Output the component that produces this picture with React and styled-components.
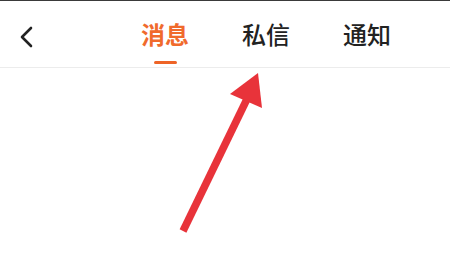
import React from "react";
import styled, { createGlobalStyle } from "styled-components";

const Global = createGlobalStyle`
  html, body { margin: 0; padding: 0; background: #fff; }
  body { font-family: "Noto Sans CJK SC", "Noto Sans", sans-serif; }
`;

const Page = styled.div`
  position: relative;
  width: 450px;
  height: 261px;
  background: #fff;
  border-top: 1px solid #3a3a3a;
  box-sizing: border-box;
  overflow: hidden;
`;

const Header = styled.div`
  display: flex;
  align-items: flex-start;
  height: 66px;
  border-bottom: 1px solid #ececec;
`;

const Back = styled.div`
  width: 141px;
  padding: 25px 0 0 19px;
  box-sizing: border-box;
  color: #222;
`;

const Tabs = styled.div`
  display: flex;
  gap: 53px;
  padding-top: 18px;
`;

const Tab = styled.div`
  display: flex;
  flex-direction: column;
  align-items: center;
  width: 48px;
  font-size: 24px;
  line-height: 30px;
  font-weight: ${p => (p.active ? 700 : 500)};
  color: ${p => (p.active ? "#f06a2c" : "#222")};
`;

const Underline = styled.div`
  margin-top: 12px;
  width: 23px;
  height: 3px;
  border-radius: 2px;
  background: ${p => (p.active ? "#ee6427" : "transparent")};
`;

const ArrowLayer = styled.svg`
  position: absolute;
  left: 0;
  top: 0;
`;

export default function App() {
  const tabs = ["消息", "私信", "通知"];
  return (
    <>
      <Global />
      <Page>
        <Header>
          <Back>
            <svg width="16" height="22" viewBox="0 0 16 22">
              <path d="M12 2 L3 11 L12 20" fill="none" stroke="#222" strokeWidth="2.6" strokeLinecap="round" strokeLinejoin="round" />
            </svg>
          </Back>
          <Tabs>
            {tabs.map((t, i) => (
              <Tab key={t} active={i === 0}>
                {t}
                <Underline active={i === 0} />
              </Tab>
            ))}
          </Tabs>
        </Header>
        <ArrowLayer width="450" height="261" viewBox="0 0 450 261">
          <line x1="183" y1="230" x2="248" y2="96" stroke="#e8333a" strokeWidth="7.5" strokeLinecap="butt" />
          <polygon points="258,72 230,93 262,107" fill="#e8333a" />
        </ArrowLayer>
      </Page>
    </>
  );
}
